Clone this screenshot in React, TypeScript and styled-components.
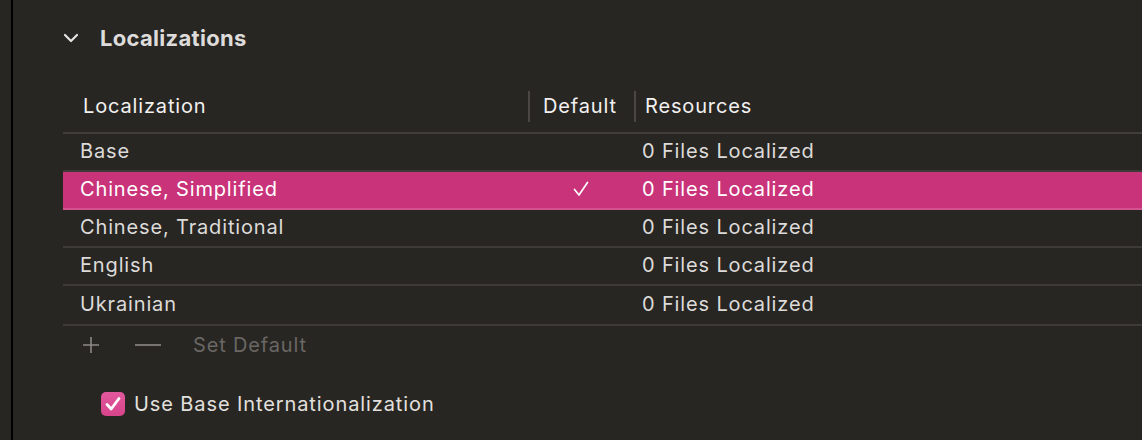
import styled, { createGlobalStyle } from "styled-components";

const GlobalStyle = createGlobalStyle`
    html, body {
        margin: 0;
        padding: 0;
        background: #282623;
    }
    body {
        font-family: Inter, "Noto Sans", "Liberation Sans", sans-serif;
        -webkit-font-smoothing: antialiased;
    }
`;

interface LocalizationRow {
    name: string;
    isDefault: boolean;
    resources: string;
}

const rows: LocalizationRow[] = [
    { name: "Base", isDefault: false, resources: "0 Files Localized" },
    { name: "Chinese, Simplified", isDefault: true, resources: "0 Files Localized" },
    { name: "Chinese, Traditional", isDefault: false, resources: "0 Files Localized" },
    { name: "English", isDefault: false, resources: "0 Files Localized" },
    { name: "Ukrainian", isDefault: false, resources: "0 Files Localized" },
];

export default function App() {
    return (
        <>
            <GlobalStyle />
            <Page>
                <Gutter />
                <Section>
                    <SectionTitle>
                        <Chevron viewBox="0 0 16 12" width="16" height="12">
                            <path d="M2 3 L8 9 L14 3" fill="none" stroke="#e6e4e2" strokeWidth="2.2" strokeLinecap="round" strokeLinejoin="round" />
                        </Chevron>
                        <TitleText>Localizations</TitleText>
                    </SectionTitle>

                    <Table>
                        <HeaderRow>
                            <HeaderCell $col="name">Localization</HeaderCell>
                            <HeaderCell $col="default">Default</HeaderCell>
                            <HeaderCell $col="resources">Resources</HeaderCell>
                        </HeaderRow>
                        {rows.map((row) => (
                            <Row key={row.name} $selected={row.isDefault}>
                                <NameCell>{row.name}</NameCell>
                                <DefaultCell>
                                    {row.isDefault && (
                                        <svg viewBox="0 0 16 16" width="16" height="16">
                                            <path d="M1.5 8.5 L6 14 L14.5 1.5" fill="none" stroke="#fff" strokeWidth="1.7" strokeLinecap="round" strokeLinejoin="round" />
                                        </svg>
                                    )}
                                </DefaultCell>
                                <ResourceCell>{row.resources}</ResourceCell>
                            </Row>
                        ))}
                    </Table>

                    <Toolbar>
                        <ToolButton>
                            <svg viewBox="0 0 20 20" width="20" height="20">
                                <path d="M10 2 V18 M2 10 H18" stroke="#8c8986" strokeWidth="1.6" />
                            </svg>
                        </ToolButton>
                        <ToolButton>
                            <svg viewBox="0 0 26 20" width="26" height="20">
                                <path d="M0 10 H26" stroke="#8c8986" strokeWidth="1.6" />
                            </svg>
                        </ToolButton>
                        <SetDefault>Set Default</SetDefault>
                    </Toolbar>

                    <CheckRow>
                        <CheckBox>
                            <svg viewBox="0 0 24 24" width="24" height="24">
                                <path d="M6 12.5 L10.2 17 L18 6.5" fill="none" stroke="#fff" strokeWidth="2.8" strokeLinecap="round" strokeLinejoin="round" />
                            </svg>
                        </CheckBox>
                        <CheckLabel>Use Base Internationalization</CheckLabel>
                    </CheckRow>
                </Section>
            </Page>
        </>
    );
}

const Page = styled.div`
    display: flex;
    width: 1142px;
    height: 440px;
    overflow: hidden;
`;

const Gutter = styled.div`
    width: 11px;
    flex-shrink: 0;
    border-right: 2px solid #000;
`;

const Section = styled.div`
    flex: 1;
    padding: 26px 0 0 50px;
    display: flex;
    flex-direction: column;
`;

const SectionTitle = styled.div`
    display: flex;
    align-items: center;
    height: 24px;
`;

const Chevron = styled.svg`
    margin-right: 21px;
`;

const TitleText = styled.span`
    font-size: 22px;
    font-weight: 700;
    letter-spacing: 0.3px;
    color: #dedcda;
`;

const Table = styled.div`
    margin-top: 30px;
    display: flex;
    flex-direction: column;
    font-size: 20px;
    letter-spacing: 0.85px;
`;

const HeaderRow = styled.div`
    display: grid;
    grid-template-columns: 465px 106px 1fr;
    height: 52px;
    align-items: center;
    border-bottom: 2px solid #403d3a;
`;

const HeaderCell = styled.div<{ $col: "name" | "default" | "resources" }>`
    color: #f2f1f0;
    height: 31px;
    display: flex;
    align-items: center;
    padding-left: ${({ $col }) => ($col === "name" ? "20px" : $col === "default" ? "13px" : "9px")};
    border-left: ${({ $col }) => ($col === "name" ? "none" : "2px solid #4a4744")};
`;

const Row = styled.div<{ $selected: boolean }>`
    display: grid;
    grid-template-columns: 465px 106px 1fr;
    align-items: center;
    height: 36px;
    padding-bottom: 2px;
    box-sizing: border-box;
    height: 38px;
    background: ${({ $selected }) => ($selected ? "#c93379" : "transparent")};
    border-bottom: 2px solid ${({ $selected }) => ($selected ? "#d4528e" : "#3d3a37")};
    color: ${({ $selected }) => ($selected ? "#ffffff" : "#dddbd9")};

    &:last-child {
        height: 40px;
    }
`;

const NameCell = styled.div`
    padding-left: 17px;
`;

const DefaultCell = styled.div`
    display: flex;
    justify-content: center;
    align-items: center;
`;

const ResourceCell = styled.div`
    padding-left: 8px;
`;

const Toolbar = styled.div`
    display: flex;
    align-items: center;
    height: 38px;
    padding-left: 18px;
`;

const ToolButton = styled.div`
    display: flex;
    align-items: center;
    margin-right: 34px;
`;

const SetDefault = styled.span`
    font-size: 20px;
    letter-spacing: 0.85px;
    color: #6a6764;
    margin-left: -2px;
`;

const CheckRow = styled.div`
    display: flex;
    align-items: center;
    margin-top: 28px;
    padding-left: 38px;
`;

const CheckBox = styled.div`
    width: 24px;
    height: 24px;
    border-radius: 5px;
    background: linear-gradient(#e2589d, #d8448b);
    display: flex;
    align-items: center;
    justify-content: center;
    margin-right: 9px;
`;

const CheckLabel = styled.span`
    font-size: 20px;
    letter-spacing: 0.9px;
    color: #e2e0de;
`;
